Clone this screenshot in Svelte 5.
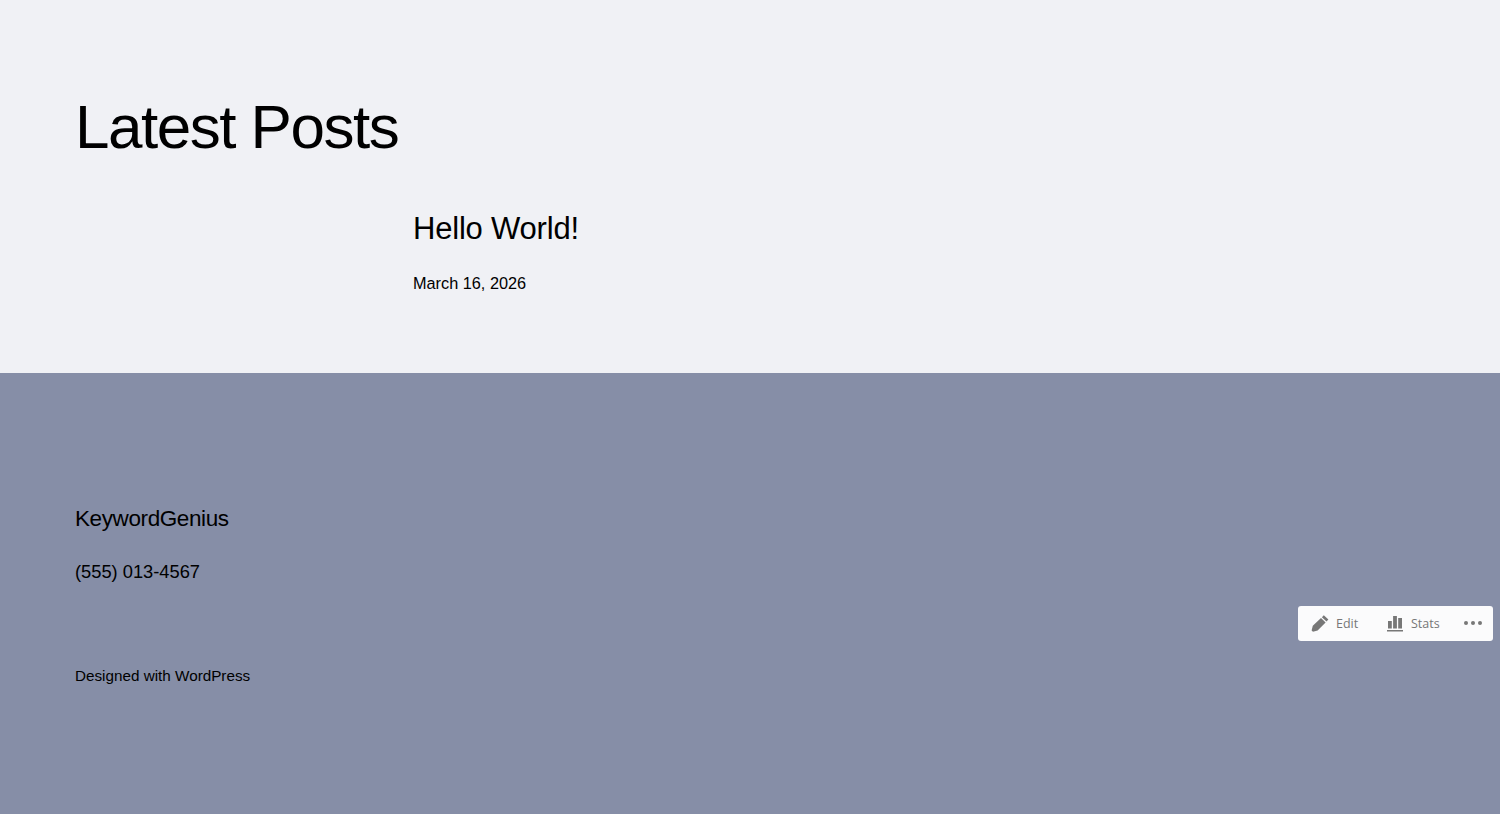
<script lang="ts">
  const actions = [
    { label: "Edit", icon: "edit" },
    { label: "Stats", icon: "stats" }
  ];
</script>

<div class="page">
  <main class="latest">
    <h1>Latest Posts</h1>
    <article class="post">
      <h2>Hello World!</h2>
      <p class="date">March 16, 2026</p>
    </article>
  </main>

  <footer class="site-footer">
    <h3>KeywordGenius</h3>
    <p class="phone">(555) 013-4567</p>
    <p class="credit">Designed with WordPress</p>
  </footer>

  <div class="toolbar">
    {#each actions as action}
      <span class="action {action.icon}">
        {#if action.icon === "edit"}
          <svg width="20" height="20" viewBox="0 0 20 20" aria-hidden="true">
            <path d="M13.8 1.2l4.6 4.4-1.9 2-4.6-4.4zM11 4l4.6 4.4-8 8.2-4.6 1.2-1.4-1.4 1.2-4.6z" fill="#777" />
          </svg>
        {:else}
          <svg width="18" height="18" viewBox="0 0 18 18" aria-hidden="true">
            <path d="M2 6h3.8v7.5H2zM7.1 1h3.8v12.5H7.1zM12.2 3h3.8v10.5h-3.8zM1 15h16v1.5H1z" fill="#777" />
          </svg>
        {/if}
        <span>{action.label}</span>
      </span>
    {/each}
    <span class="more"><i></i><i></i><i></i></span>
  </div>
</div>

<style>
  :global(body) {
    margin: 0;
    background: #868ea7;
  }

  .page {
    height: 814px;
    overflow: hidden;
    font-family: "Liberation Sans", Arial, sans-serif;
    color: #000;
  }

  .latest {
    box-sizing: border-box;
    height: 373px;
    padding: 90px 75px 0;
    background: #f0f1f5;
  }

  h1 {
    margin: 0;
    font-size: 62px;
    line-height: 74px;
    font-weight: 400;
    letter-spacing: -1.5px;
  }

  .post {
    margin: 46px 0 0 338px;
  }

  h2 {
    margin: 0;
    font-size: 31px;
    line-height: 38px;
    font-weight: 400;
    letter-spacing: -0.2px;
  }

  .date {
    margin: 23px 0 0;
    font-size: 16.3px;
    line-height: 24px;
  }

  .site-footer {
    box-sizing: border-box;
    height: 441px;
    padding: 131px 75px 0;
    background: #868ea7;
  }

  h3 {
    margin: 0;
    font-size: 22.5px;
    line-height: 30px;
    font-weight: 400;
    letter-spacing: -0.4px;
  }

  .phone {
    margin: 25px 0 0;
    font-size: 18.3px;
    line-height: 26px;
  }

  .credit {
    margin: 79px 0 0;
    font-size: 15.25px;
    line-height: 24px;
  }

  .toolbar {
    position: fixed;
    left: 1298px;
    top: 606px;
    box-sizing: border-box;
    width: 195px;
    height: 35px;
    display: flex;
    align-items: center;
    padding-left: 13px;
    background: #fbfbfc;
    border-radius: 3px;
    color: #777;
    font-family: "Open Sans", sans-serif;
    font-size: 12.5px;
  }

  .action {
    display: flex;
    align-items: center;
  }

  .edit {
    gap: 6px;
    width: 75px;
  }

  .edit svg {
    margin-left: -1px;
  }

  .stats {
    gap: 7px;
    width: 78px;
  }

  .more {
    display: flex;
    gap: 3px;
    margin-top: -1px;
  }

  .more i {
    width: 4px;
    height: 4px;
    border-radius: 50%;
    background: #777;
  }
</style>
